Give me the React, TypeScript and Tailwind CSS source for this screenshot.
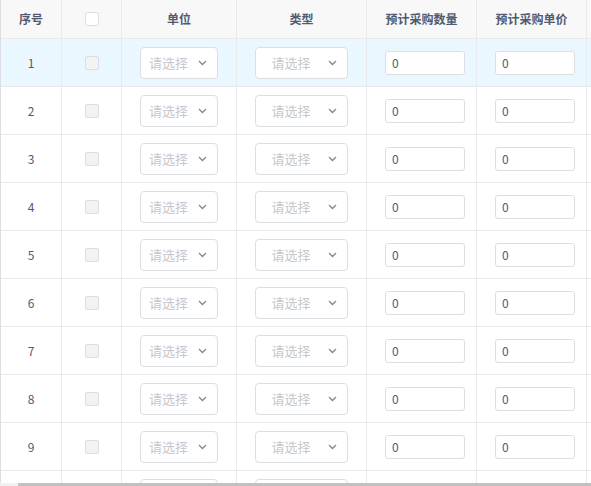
import React from "react";

const rows = [1, 2, 3, 4, 5, 6, 7, 8, 9, 10];

const font = { fontFamily: '"Microsoft YaHei", "Noto Sans CJK SC", sans-serif' };

const Chevron: React.FC = () => (
    <svg width="9" height="6" viewBox="0 0 9 6" className="shrink-0">
        <path d="M1 1l3.5 3.5L8 1" fill="none" stroke="#808695" strokeWidth="1.3" />
    </svg>
);

// last row is only peeking above the scrollbar, so its texts are left out
const Select: React.FC<{ empty?: boolean }> = ({ empty }) => (
    <div className="flex h-[32px] w-full items-center rounded-[4px] border border-[#dcdee2] bg-white">
        <span className="flex-1 pl-[2px] text-center text-[13px] text-[#c5c8ce]">{empty ? null : "请选择"}</span>
        <span className="mr-[10px] ml-[4px] flex items-center">
            <Chevron />
        </span>
    </div>
);

const NumInput: React.FC<{ empty?: boolean }> = ({ empty }) => (
    <div className="flex h-[24px] w-[80px] items-center rounded-[3px] border border-[#dcdee2] bg-white pl-[6px] text-[12px] text-[#515a6e]">
        {empty ? null : "0"}
    </div>
);

export default function App() {
    return (
        <div className="relative h-[486px] w-[591px] overflow-hidden bg-white" style={font}>
            <div className="w-[700px] border-l border-[#dcdee2]">
                {/* header */}
                <div className="flex h-[39px] border-b border-[#e8eaec] bg-[#f8f8f9] text-[12px] font-bold text-[#515a6e]">
                    <div className="flex w-[61px] items-center justify-center border-r border-[#e8eaec]">序号</div>
                    <div className="flex w-[60px] items-center justify-center border-r border-[#e8eaec]">
                        <span className="h-[14px] w-[14px] rounded-[2px] border border-[#dcdee2] bg-white" />
                    </div>
                    <div className="flex w-[115px] items-center justify-center border-r border-[#e8eaec]">单位</div>
                    <div className="flex w-[130px] items-center justify-center border-r border-[#e8eaec]">类型</div>
                    <div className="flex w-[110px] items-center justify-center border-r border-[#e8eaec]">预计采购数量</div>
                    <div className="flex w-[110px] items-center justify-center border-r border-[#e8eaec]">预计采购单价</div>
                    <div className="flex-1" />
                </div>

                {rows.map((n) => {
                    const last = n === rows.length;
                    return (
                        <div
                            key={n}
                            className={`flex h-[48px] border-b border-[#e8eaec] text-[12px] text-[#515a6e] ${n === 1 ? "bg-[#ebf7ff]" : "bg-white"}`}
                        >
                            <div className="flex w-[61px] items-center justify-center border-r border-[#e8eaec]">{last ? null : n}</div>
                            <div className="flex w-[60px] items-center justify-center border-r border-[#e8eaec]">
                                <span className="mt-[1px] h-[14px] w-[14px] rounded-[2px] border border-[#dcdee2] bg-[#f3f3f3]" />
                            </div>
                            <div className="flex w-[115px] items-center border-r border-[#e8eaec] pl-[18px] pr-[18px]">
                                <Select empty={last} />
                            </div>
                            <div className="flex w-[130px] items-center border-r border-[#e8eaec] pl-[18px] pr-[18px]">
                                <Select empty={last} />
                            </div>
                            <div className="flex w-[110px] items-center border-r border-[#e8eaec] pl-[18px]">
                                <NumInput empty={last} />
                            </div>
                            <div className="flex w-[110px] items-center border-r border-[#e8eaec] pl-[18px]">
                                <NumInput empty={last} />
                            </div>
                            <div className="flex-1" />
                        </div>
                    );
                })}
            </div>

            {/* horizontal scrollbar */}
            <div className="absolute bottom-0 left-0 flex h-[3px] w-full bg-[#f1f1f1]">
                <div className="ml-[18px] h-full flex-1 bg-[#c1c1c1]" />
            </div>
        </div>
    );
}
